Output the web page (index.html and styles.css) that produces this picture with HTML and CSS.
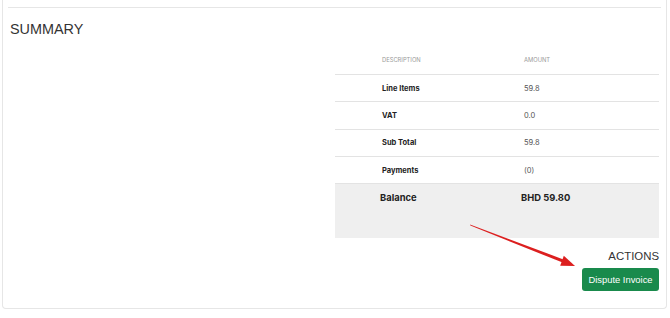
FILE: index.html
```html
<!DOCTYPE html>
<html lang="en">
<head>
    <meta charset="UTF-8" />
    <meta name="viewport" content="width=device-width, initial-scale=1.0"/>
    <title>Invoice Summary</title>
    <link rel="stylesheet" href="styles.css">
</head>
<body>

    <div class="card">
        <hr class="divider">

        <h2 class="section-title">SUMMARY</h2>

        <div class="summary-grid">
            <div></div>
            <table class="summary-table">
                <thead>
                    <tr>
                        <th>Description</th>
                        <th>Amount</th>
                    </tr>
                </thead>
                <tbody>
                    <tr>
                        <td class="label">Line Items</td>
                        <td>59.8</td>
                    </tr>
                    <tr>
                        <td class="label">VAT</td>
                        <td>0.0</td>
                    </tr>
                    <tr>
                        <td class="label">Sub Total</td>
                        <td>59.8</td>
                    </tr>
                    <tr>
                        <td class="label">Payments</td>
                        <td>(0)</td>
                    </tr>
                    <tr class="balance">
                        <td>Balance</td>
                        <td>BHD 59.80</td>
                    </tr>
                </tbody>
            </table>
        </div>

        <div class="actions">
            <h3 class="actions-title">ACTIONS</h3>
            <button class="btn-dispute">Dispute Invoice</button>
        </div>
    </div>

    <!-- annotation arrow -->
    <svg class="annotation" width="670" height="318" viewBox="0 0 670 318">
        <polygon points="470,224.6 470.4,225.6 562.6,262.6 563.4,259.4" fill="#dc1f1f"/>
        <polygon points="575,266 560.2,265.8 563.8,255.8" fill="#dc1f1f"/>
    </svg>

</body>
</html>
```

FILE: styles.css
```css
body {
    font-family: 'Liberation Sans', Arial, sans-serif;
    background: #fff;
    color: #333;
    margin: 0;
    position: relative;
}
.card {
    margin: 0 3px 0 2px;
    padding: 7px 7px 17px 7px;
    border: 1px solid #e6e6e6;
    border-top: none;
    border-radius: 0 0 4px 4px;
}
.divider {
    margin: 0 -2px;
    border: none;
    border-top: 1px solid #e6e6e6;
    height: 0;
}
.section-title {
    margin: 13px 0 0;
    font-size: 14.4px;
    line-height: 17px;
    font-weight: normal;
    color: #333;
}
.summary-grid {
    display: grid;
    grid-template-columns: 1fr 324px;
    margin-top: 8px;
}
.summary-table {
    width: 100%;
    border-collapse: collapse;
    table-layout: fixed;
    font-family: Inter, 'Liberation Sans', sans-serif;
}
.summary-table th,
.summary-table td {
    text-align: left;
    padding: 0;
}
.summary-table th:first-child,
.summary-table td:first-child {
    width: 142px;
    padding-left: 47px;
}
.summary-table th {
    height: 26px;
    padding-bottom: 2px;
    font-size: 5.8px;
    font-weight: normal;
    text-transform: uppercase;
    color: #9a9a9a;
    border-bottom: 1px solid #e3e3e3;
}
.summary-table td {
    height: 26.3px;
    font-size: 7.5px;
    color: #555;
    border-bottom: 1px solid #e3e3e3;
}
.summary-table td.label {
    font-weight: 650;
    color: #222;
}
.summary-table .balance td {
    height: 54px;
    vertical-align: top;
    padding-top: 8px;
    box-sizing: border-box;
    background: #efefef;
    font-size: 9.4px;
    font-weight: 700;
    color: #222;
    border-bottom: none;
}
.summary-table .balance td:first-child {
    padding-left: 45px;
}
.summary-table .balance td:last-child {
    padding-left: 0;
    text-indent: -3px;
}
.actions {
    display: flex;
    flex-direction: column;
    align-items: flex-end;
    margin-top: 12px;
}
.actions-title {
    margin: 0;
    font-size: 11.4px;
    line-height: 13px;
    font-weight: normal;
    color: #333;
}
.btn-dispute {
    margin-top: 5px;
    width: 77px;
    height: 23px;
    padding: 0;
    border: none;
    border-radius: 3px;
    background: #198a4c;
    color: #fff;
    font-family: 'Liberation Sans', Arial, sans-serif;
    font-size: 9.4px;
    cursor: pointer;
}
.annotation {
    position: absolute;
    top: 0;
    left: 0;
    pointer-events: none;
}
```
